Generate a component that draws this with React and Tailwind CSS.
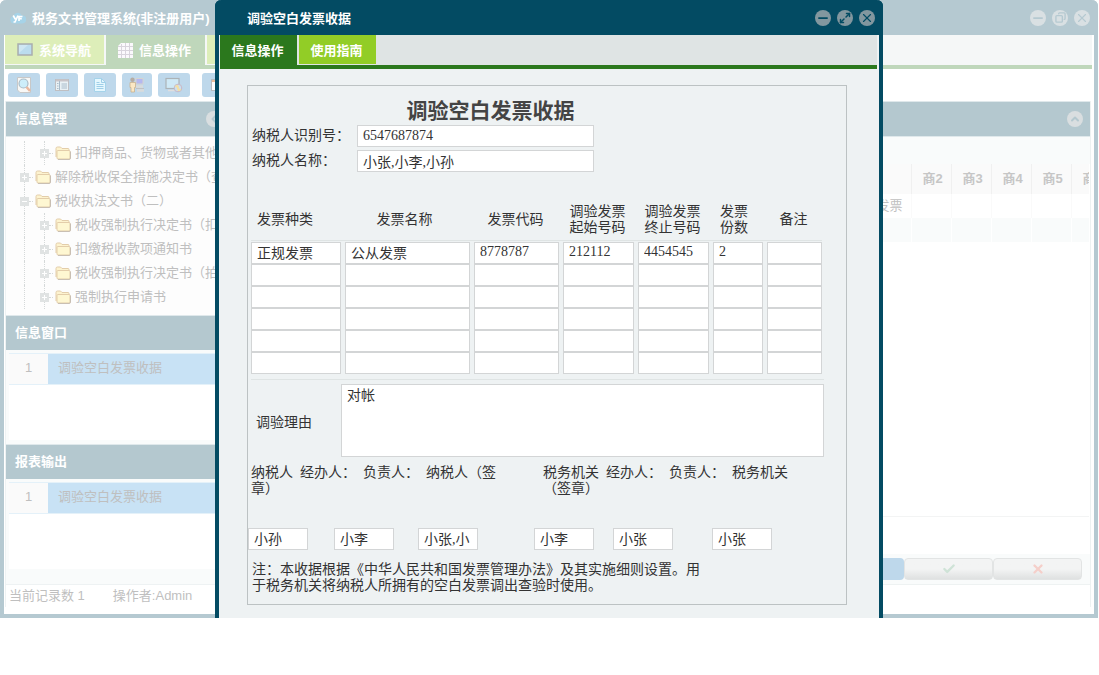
import React, { useState } from "react";
import { Check, ChevronLeft, ChevronUp, Copy, Maximize2, Minus, X } from "lucide-react";

const treeNodes = [
  { label: "扣押商品、货物或者其他财产", depth: 2, open: false },
  { label: "解除税收保全措施决定书（查封）", depth: 1, open: false },
  { label: "税收执法文书（二）", depth: 1, open: true },
  { label: "税收强制执行决定书（扣缴）", depth: 2, open: false },
  { label: "扣缴税收款项通知书", depth: 2, open: false },
  { label: "税收强制执行决定书（拍卖）", depth: 2, open: false },
  { label: "强制执行申请书", depth: 2, open: false },
];

const invoiceRows = [
  ["正规发票", "公从发票", "8778787", "212112", "4454545", "2", ""],
  ["", "", "", "", "", "", ""],
  ["", "", "", "", "", "", ""],
  ["", "", "", "", "", "", ""],
  ["", "", "", "", "", "", ""],
  ["", "", "", "", "", "", ""],
];

const columns = [
  { name: "发票种类", align: "pl-1.5 text-left" },
  { name: "发票名称", align: "pr-2.5" },
  { name: "发票代码", align: "pr-1.5" },
  { name: "调验发票起始号码", align: "pr-1.5" },
  { name: "调验发票终止号码", align: "pr-1.5" },
  { name: "发票份数", align: "pl-0.5 pr-3.5" },
  { name: "备注", align: "pr-0.5" },
];

const signers = ["小孙", "小李", "小张,小", "小李", "小张", "小张"];

const fieldStyle = "h-[22px] border border-[#d3d5d6] bg-white px-[5px] pb-px text-sm leading-4 text-[#333] outline-none";

const RoundButton = ({ label, className, children }) => (
  <button type="button" aria-label={label} className={`flex size-4 shrink-0 items-center justify-center rounded-full ${className}`}>
    {children}
  </button>
);

const Logo = () => (
  <svg viewBox="0 0 16 14" className="h-3.5 w-4" aria-hidden="true">
    <path d="M4 12.500a3.700 3.700 0 0 1-.8-7.300A4.800 4.800 0 0 1 12 4.400 4 4 0 0 1 12.400 12.500z" fill="#a6d3e8" />
    <path d="M3.200 4.500l2.200 3.800M8 4.500L5 11H3.500M9 10V5.500h3.500M9 7.700h2.800" stroke="#fff" strokeWidth="1.700" fill="none" />
  </svg>
);

const ScreenIcon = () => (
  <svg viewBox="0 0 16 13" className="h-[13px] w-4" aria-hidden="true">
    <rect x="1" y="1" width="14" height="11" fill="#bbdcee" stroke="#a9adae" strokeWidth="1.500" />
    <path d="M2 2h9L2 10z" fill="#cfe7f3" />
  </svg>
);

const GridIcon = () => (
  <svg viewBox="0 0 15 15" className="size-[15px]" aria-hidden="true">
    <path d="M3 0h12v15H0V3z" fill="#fbf9fc" />
    <path d="M3.500 1v14M7.500 0v15M11.500 0v15M0 3.500h15M0 7.500h15M0 11.500h15" stroke="#d8d4dc" />
  </svg>
);

const FolderIcon = () => (
  <svg viewBox="0 0 16 14" className="h-3.5 w-4 shrink-0" aria-hidden="true">
    <path d="M1 11V2.500Q1 1 2.500 1H5.500l1.500 1.500h6q1 0 1 1V5" fill="#fdf3cf" stroke="#e3cdaa" />
    <rect x="2" y="4.500" width="13" height="8.500" rx="1" fill="#fef7d2" stroke="#e3cdaa" />
    <path d="M15.500 5.500V12q0 1.500-1.500 1.500H3" stroke="#c9bfb3" fill="none" />
  </svg>
);

const SearchDocIcon = () => (
  <svg viewBox="0 0 16 16" className="size-4" aria-hidden="true">
    <path d="M1.500.5h13v15H4L1.500 13z" fill="#f8f8f6" stroke="#c8c8c8" />
    <circle cx="7.500" cy="6.500" r="4.500" fill="#cdeefa" stroke="#a9bcc8" strokeWidth="1.200" />
    <path d="M10.500 10l3.500 4" stroke="#e9b9a0" strokeWidth="2.500" />
  </svg>
);

const ListIcon = () => (
  <svg viewBox="0 0 14 14" className="size-3.5" aria-hidden="true">
    <rect x=".5" y="1.500" width="13" height="11" fill="#e9f1f5" stroke="#bfbfc2" />
    <path d="M1 2.500h12" stroke="#c9c4c8" strokeWidth="2" />
    <path d="M4.500 3v9M2 5.500h1.500M2 8h1.500M2 10.500h1.500M6.500 6h5.500M6.500 8h5.500M6.500 10h5.500" stroke="#a9bccb" />
  </svg>
);

const PageIcon = () => (
  <svg viewBox="0 0 14 14" className="size-3.5" aria-hidden="true">
    <path d="M1.500.5h7l4 4v9h-11z" fill="#e5f7fe" stroke="#a5d3ea" />
    <path d="M8.500.5v4h4M3.500 4.500h3M3.500 6.500h7M3.500 8.500h7M3.500 10.500h7" stroke="#9fcfe8" fill="none" />
  </svg>
);

const UserIcon = () => (
  <svg viewBox="0 0 16 16" className="size-4" aria-hidden="true">
    <rect x="7" y="1.500" width="7" height="5.500" fill="#b4b8f0" stroke="#d5d3d0" />
    <path d="M7 9.500h7M8 13.500h7" stroke="#d9dbdc" strokeWidth="2.500" />
    <path d="M7 11.500h8" stroke="#bfc1c3" />
    <circle cx="3.500" cy="2.800" r="2.200" fill="#b5aca4" />
    <path d="M1 5.500h5.500v5H5.500V15H2V10.500H1z" fill="#fbe8c4" stroke="#c9b391" strokeWidth=".8" />
  </svg>
);

const ScreenGlobeIcon = () => (
  <svg viewBox="0 0 18 16" className="h-4 w-[18px]" aria-hidden="true">
    <rect x="1" y="1.500" width="13" height="10" fill="#cfe9f6" stroke="#acb3b7" strokeWidth="1.200" />
    <path d="M3 13.500h7" stroke="#e0dede" strokeWidth="1.500" />
    <circle cx="13" cy="11" r="3.800" fill="#c9e0f3" stroke="#c9b8c4" />
    <path d="M10.500 10q2.500-2.500 2.500 1t2.500 1" stroke="#f3dfa4" strokeWidth="2" fill="none" />
  </svg>
);

const WindowIcon = () => (
  <svg viewBox="0 0 14 14" className="size-3.5" aria-hidden="true">
    <rect x=".5" y="1.500" width="13" height="11" fill="#fff" stroke="#b8bcc0" />
    <path d="M1 3h12" stroke="#eebf9c" strokeWidth="2" />
  </svg>
);

const PanelHeader = ({ title, children }) => (
  <div className="flex h-[35px] items-center justify-between border-t border-[#dfe8eb] bg-[#b4c8cf] pr-[7px] pl-[9px] text-[13px] font-bold text-white">
    <span>{title}</span>
    {children}
  </div>
);

const TreeRow = ({ node }) => (
  <li className="flex h-6 items-center whitespace-nowrap">
    <span className="ml-[18px] h-6 shrink-0 border-l border-dotted border-[#d5d9d9]" />
    {node.depth === 2 && (
      <span className="ml-[19px] h-6 shrink-0 border-l border-dotted border-[#d5d9d9]" />
    )}
    <button
      type="button"
      aria-label={node.open ? "收起" : "展开"}
      className="-ml-[5px] flex size-[9px] shrink-0 items-center justify-center bg-[#e0e3e3] text-white"
    >
      <svg viewBox="0 0 9 9" className="size-[9px]">
        <path d={node.open ? "M2 4.500h5" : "M2 4.500h5M4.500 2v5"} stroke="currentColor" />
      </svg>
    </button>
    <span className="mr-0.5 w-1 shrink-0 border-t border-dotted border-[#d5d9d9]" />
    <FolderIcon />
    <a href="#" className="ml-1">{node.label}</a>
  </li>
);

const RecordPanel = ({ title }) => (
  <section>
    <PanelHeader title={title} />
    <div className="h-[94px] bg-[#f9fbfb] px-[3px] pt-[3px]">
      <div className="h-[87px] bg-white">
        <div className="flex h-8 items-stretch border-y border-[#e4f1f9] bg-[#c8e2f5]">
          <span className="flex w-[39px] items-center justify-center bg-[#fafafa] pb-0.5">1</span>
          <span className="flex items-center pb-0.5 pl-2.5">调验空白发票收据</span>
        </div>
      </div>
    </div>
  </section>
);

const Sidebar = () => (
  <aside className="w-[224px] shrink-0 border-l border-[#eef2f3] text-[13px] text-[#bfbfbf]">
    <PanelHeader title="信息管理">
      <RoundButton label="收起面板" className="bg-[#d9dee0] text-[#b4c8cf]">
        <ChevronLeft size={12} strokeWidth={4} />
      </RoundButton>
    </PanelHeader>
    <ul className="h-[179px] border-t border-[#dfe8eb] bg-[#fdfdfd] pt-1">
      {treeNodes.map((node) => (
        <TreeRow key={node.label} node={node} />
      ))}
    </ul>
    <RecordPanel title="信息窗口" />
    <RecordPanel title="报表输出" />
    <div className="h-3 border-b border-[#eef2f3] bg-[#f9fbfb]" />
    <footer className="flex h-[22px] items-center gap-7 pl-[3px]">
      <span>当前记录数 1</span>
      <span>操作者:Admin</span>
    </footer>
  </aside>
);

const MainPanel = () => (
  <main className="mr-[3px] flex min-w-0 flex-1 flex-col border-r border-[#eef2f2]">
    <PanelHeader>
      <RoundButton label="折叠" className="bg-[#d9dee0] text-[#b4c8cf]">
        <ChevronUp size={12} strokeWidth={4} />
      </RoundButton>
    </PanelHeader>
    <div className="h-7 border-t border-[#dfe8eb] bg-[#f9fbfb]" />
    <div className="mr-px h-[390px] bg-white text-[13px]">
      <table className="w-full table-fixed border-collapse">
        <colgroup>
          <col />
          <col className="w-10" />
          <col className="w-10" />
          <col className="w-10" />
          <col className="w-10" />
          <col className="w-[18px]" />
        </colgroup>
        <thead>
          <tr className="h-[30px] bg-[#fafafa] text-[#c6c6c6]">
            <th />
            {["商2", "商3", "商4", "商5", "商6"].map((name) => (
              <th key={name} className="overflow-hidden border-l border-[#f0f0f0] pl-[11px] text-left whitespace-nowrap">
                {name}
              </th>
            ))}
          </tr>
        </thead>
        <tbody>
          <tr className="h-6 text-[#bfbfbf]">
            <td className="pr-2 text-right">正规发票</td>
            {[2, 3, 4, 5, 6].map((n) => (
              <td key={n} className="border-l border-[#fafafa]" />
            ))}
          </tr>
          <tr className="h-6 bg-[#f9fbfb]">
            <td />
            {[2, 3, 4, 5, 6].map((n) => (
              <td key={n} className="border-l border-white" />
            ))}
          </tr>
        </tbody>
      </table>
      <div className="h-[275px] border-b border-[#f3f4f4]" />
    </div>
    <div className="flex h-[31px] items-center justify-end border-b border-[#eef2f2] bg-[#f9fbfb] pr-2">
      <button type="button" aria-label="新增" className="h-[22px] w-[89px] rounded bg-[#bed8eb]" />
      <button
        type="button"
        aria-label="确定"
        className="flex h-[22px] w-[89px] items-center justify-center rounded border border-[#e2e4e4] bg-linear-to-b from-[#f3f4f4] from-50% to-[#dfe1e1] text-[#cfe3d7]"
      >
        <Check size={14} strokeWidth={4} />
      </button>
      <button
        type="button"
        aria-label="取消"
        className="flex h-[22px] w-[89px] items-center justify-center rounded border border-[#e2e4e4] bg-linear-to-b from-[#f3f4f4] from-50% to-[#dfe1e1] text-[#f5cfca]"
      >
        <X size={14} strokeWidth={4} />
      </button>
    </div>
  </main>
);

const ReceiptForm = () => {
  const [reason, setReason] = useState("对帐");

  return (
    <form className="mt-4 mr-8 mb-3.5 ml-7 border border-[#bcc2c3] text-sm leading-4 text-[#333]">
      <h1 className="mt-3 mr-[113px] text-center text-[21px] leading-[26px] font-bold text-[#444]">调验空白发票收据</h1>
      <div className="mt-px flex items-center pl-1">
        <label htmlFor="taxId" className="w-[105px]">纳税人识别号：</label>
        <input id="taxId" defaultValue="6547687874" className={`w-[237px] ${fieldStyle}`} />
      </div>
      <div className="mt-[3px] flex items-center pl-1">
        <label htmlFor="taxName" className="w-[105px]">纳税人名称：</label>
        <input id="taxName" defaultValue="小张,小李,小孙" className={`w-[237px] ${fieldStyle}`} />
      </div>

      <table className="mt-[26px] ml-[3px] w-[571px] table-fixed border-collapse">
        <colgroup>
          <col className="w-[94px]" />
          <col className="w-[129px]" />
          <col className="w-[89px]" />
          <col className="w-[75px]" />
          <col className="w-[75px]" />
          <col className="w-[54px]" />
          <col className="w-[55px]" />
        </colgroup>
        <thead>
          <tr className="h-[42px] border-b border-[#dfe4e4]">
            {columns.map(({ name, align }) => (
              <th key={name} scope="col" className={`pt-0.5 font-normal ${align}`}>
                {name}
              </th>
            ))}
          </tr>
        </thead>
        <tbody>
          {invoiceRows.map((row, r) => (
            <tr key={r}>
              {row.map((value, c) => (
                <td key={c} className={`p-0 ${r === 0 ? "pt-px" : ""} ${c < 6 ? "pr-1" : ""}`}>
                  <input
                    aria-label={`${columns[c].name} ${r + 1}`}
                    defaultValue={value}
                    className={`block w-full ${fieldStyle}`}
                  />
                </td>
              ))}
            </tr>
          ))}
        </tbody>
      </table>

      <div className="mt-[5px] ml-[3px] flex w-[573px] items-center border-t border-[#dfe4e4] pt-1">
        <label htmlFor="reason" className="w-[90px] shrink-0 pt-1.5 pl-[5px]">调验理由</label>
        <textarea
          id="reason"
          value={reason}
          onChange={(e) => setReason(e.target.value)}
          className="h-[73px] flex-1 resize-none border border-[#d3d5d6] bg-white px-[5px] py-[3px] outline-none"
        />
      </div>

      <div className="mt-2 ml-[3px] flex gap-[42px] whitespace-pre-wrap">
        <p className="w-[250px]">{"纳税人  经办人：  负责人：  纳税人（签章）"}</p>
        <p className="w-[250px]">{"税务机关  经办人：  负责人：  税务机关（签章）"}</p>
      </div>

      <div className="mt-[31px] grid grid-cols-[86px_84px_116px_79px_99px_60px]">
        {signers.map((name, i) => (
          <input key={i} aria-label={`签章 ${i + 1}`} defaultValue={name} className={`w-[60px] ${fieldStyle}`} />
        ))}
      </div>

      <p className="mt-3 mb-2.5 ml-1 w-[455px]">
        注：本收据根据《中华人民共和国发票管理办法》及其实施细则设置。用于税务机关将纳税人所拥有的空白发票调出查验时使用。
      </p>
    </form>
  );
};

const ReceiptDialog = () => (
  <div
    role="dialog"
    aria-label="调验空白发票收据"
    className="flex w-full max-w-[668px] flex-col rounded-t-md border-x-4 border-[#034b63] bg-[#eef2f3]"
  >
    <div className="-mx-1 flex h-[35px] shrink-0 items-center rounded-t-md bg-[#034b63] pr-2 pl-8 text-[13px] font-bold text-white">
      <span className="flex-1 pt-0.5">调验空白发票收据</span>
      <div className="flex gap-1.5 text-[#034b63]">
        <RoundButton label="最小化" className="bg-[#82979f]">
          <Minus size={14} strokeWidth={3} />
        </RoundButton>
        <RoundButton label="最大化" className="bg-[#82979f]">
          <Maximize2 size={12} strokeWidth={3} />
        </RoundButton>
        <RoundButton label="关闭" className="bg-[#82979f]">
          <X size={14} strokeWidth={2} />
        </RoundButton>
      </div>
    </div>
    <div className="mr-0.5 ml-px flex h-[34px] shrink-0 gap-0.5 border-b-4 border-[#2b781d] bg-[#dfe4e4] text-[13px] font-bold text-white">
      <button type="button" className="w-[77px] bg-[#2b781d] pt-0.5 pr-0.5">信息操作</button>
      <button type="button" className="w-[77px] border-b border-[#dfe4e4] bg-[#92cd26] pt-0.5 pr-0.5">使用指南</button>
    </div>
    <ReceiptForm />
  </div>
);

const toolbarIcons = [
  { label: "查询", icon: SearchDocIcon },
  { label: "列表", icon: ListIcon },
  { label: "文书", icon: PageIcon },
  { label: "用户", icon: UserIcon },
  { label: "网络", icon: ScreenGlobeIcon },
  { label: "窗口", icon: WindowIcon },
];

const App = () => {
  return (
    <div
      lang="zh-CN"
      className="relative mr-px font-['Liberation_Sans','Noto_Sans_CJK_SC',sans-serif]"
    >
      <div className="rounded-t-md border-x-4 border-b-4 border-[#b5c9d1] bg-white">
        <header className="-mx-1 flex h-[35px] items-center rounded-t-md bg-[#b5c9d1] pr-2 pl-2.5 text-[13px] font-bold text-white">
          <Logo />
          <span className="ml-1.5 flex-1 pt-0.5">税务文书管理系统(非注册用户)</span>
          <div className="flex gap-1.5 text-[#b5c9d1]">
            <RoundButton label="最小化" className="bg-[#d9e0e3]">
              <Minus size={14} strokeWidth={3} />
            </RoundButton>
            <RoundButton label="还原" className="bg-[#d9e0e3]">
              <Copy size={11} strokeWidth={3} className="-scale-x-100" />
            </RoundButton>
            <RoundButton label="关闭" className="bg-[#d9e0e3]">
              <X size={14} strokeWidth={2} />
            </RoundButton>
          </div>
        </header>
        <nav className="mr-0.5 ml-px flex h-[34px] gap-0.5 border-b-4 border-[#bfd7bb] bg-[#f5f7f7] text-[13px] font-bold text-white">
          <button type="button" className="flex w-[99px] items-center gap-1.5 border-b border-[#f5f7f7] bg-[#ddeeb9] pl-3">
            <ScreenIcon />
            <span className="pt-0.5">系统导航</span>
          </button>
          <button type="button" className="flex w-[99px] items-center gap-1.5 bg-[#bfd7bb] pl-3">
            <GridIcon />
            <span className="pt-0.5">信息操作</span>
          </button>
          <button type="button" aria-label="使用指南" className="w-[99px] border-b border-[#f5f7f7] bg-[#ddeeb9]" />
        </nav>
        <div className="flex h-8 items-center gap-1.5 pl-1">
          {toolbarIcons.map(({ label, icon: Icon }) => (
            <button
              key={label}
              type="button"
              aria-label={label}
              className="flex h-6 w-8 items-center justify-center rounded-[3px] bg-[#bed8eb] last:ml-1.5 nth-4:w-[30px]"
            >
              <Icon />
            </button>
          ))}
        </div>
        <div className="flex gap-1 pb-[7px] pl-px">
          <Sidebar />
          <MainPanel />
        </div>
      </div>

      {/* dialog lies over the whole window */}
      <div className="absolute inset-0 flex items-stretch justify-center font-['Liberation_Serif','Noto_Sans_CJK_SC',serif]">
        <ReceiptDialog />
      </div>
    </div>
  );
};

export default App;
